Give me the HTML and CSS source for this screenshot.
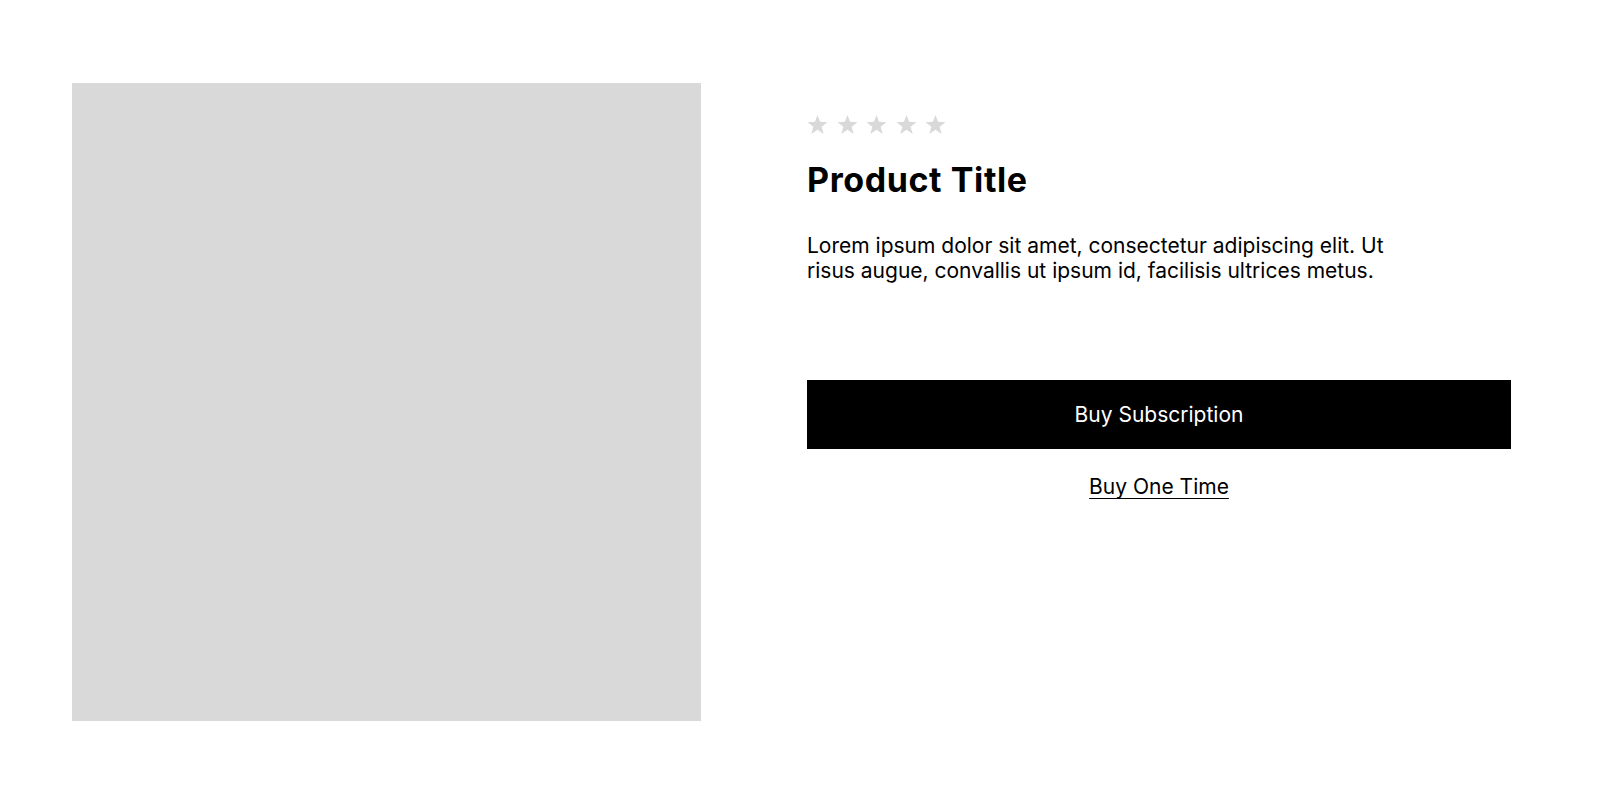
FILE: index.html
```html
<!DOCTYPE html>
<html lang="en">
<head>
<meta charset="utf-8">
<title>Product</title>
<link rel="stylesheet" href="styles.css">
</head>
<body>
<main class="product">
  <div class="product-image"></div>
  <section class="product-info">
    <div class="stars" aria-label="0 out of 5 stars">
      <svg class="star" viewBox="0 0 24 24"><polygon points="12,1 14.9,8.9 23.4,9.3 16.7,14.6 19.1,22.8 12,18.1 4.9,22.8 7.3,14.6 0.6,9.3 9.1,8.9"/></svg>
      <svg class="star" viewBox="0 0 24 24"><polygon points="12,1 14.9,8.9 23.4,9.3 16.7,14.6 19.1,22.8 12,18.1 4.9,22.8 7.3,14.6 0.6,9.3 9.1,8.9"/></svg>
      <svg class="star" viewBox="0 0 24 24"><polygon points="12,1 14.9,8.9 23.4,9.3 16.7,14.6 19.1,22.8 12,18.1 4.9,22.8 7.3,14.6 0.6,9.3 9.1,8.9"/></svg>
      <svg class="star" viewBox="0 0 24 24"><polygon points="12,1 14.9,8.9 23.4,9.3 16.7,14.6 19.1,22.8 12,18.1 4.9,22.8 7.3,14.6 0.6,9.3 9.1,8.9"/></svg>
      <svg class="star" viewBox="0 0 24 24"><polygon points="12,1 14.9,8.9 23.4,9.3 16.7,14.6 19.1,22.8 12,18.1 4.9,22.8 7.3,14.6 0.6,9.3 9.1,8.9"/></svg>
    </div>
    <h1 class="title">Product Title</h1>
    <p class="description">Lorem ipsum dolor sit amet, consectetur adipiscing elit. Ut risus augue, convallis ut ipsum id, facilisis ultrices metus.</p>
    <button class="btn-primary" type="button">Buy Subscription</button>
    <a class="link-secondary" href="#">Buy One Time</a>
  </section>
</main>
</body>
</html>
```
FILE: styles.css
```css
* { box-sizing: border-box; }
html, body { margin: 0; padding: 0; background: #fff; }
body {
  font-family: Inter, "Noto Sans", sans-serif;
  color: #000;
}
.product {
  display: flex;
  align-items: flex-start;
  gap: 106px;
  padding: 83px 89px 0 72px;
}
.product-image {
  flex: 0 0 629px;
  height: 638px;
  background: #d9d9d9;
}
.product-info {
  flex: 0 0 704px;
  display: flex;
  flex-direction: column;
  padding-top: 31px;
}
.stars {
  display: flex;
  gap: 8.5px;
  height: 21px;
}
.star {
  width: 21px;
  height: 21px;
  fill: #d9d9d9;
}
.title {
  margin: 26px 0 0;
  font-size: 34px;
  line-height: 38px;
  letter-spacing: 0.6px;
  font-weight: 700;
}
.description {
  margin: 34px 0 0;
  max-width: 610px;
  font-size: 21px;
  line-height: 25px;
}
.btn-primary {
  margin-top: 97px;
  height: 69px;
  width: 100%;
  border: 0;
  background: #000;
  color: #fff;
  font-family: inherit;
  font-size: 21px;
  cursor: pointer;
}
.link-secondary {
  align-self: center;
  margin-top: 25px;
  font-size: 21px;
  line-height: 26px;
  color: #000;
  text-decoration: underline;
  text-underline-offset: 4px;
  text-decoration-thickness: 1px;
}
```
